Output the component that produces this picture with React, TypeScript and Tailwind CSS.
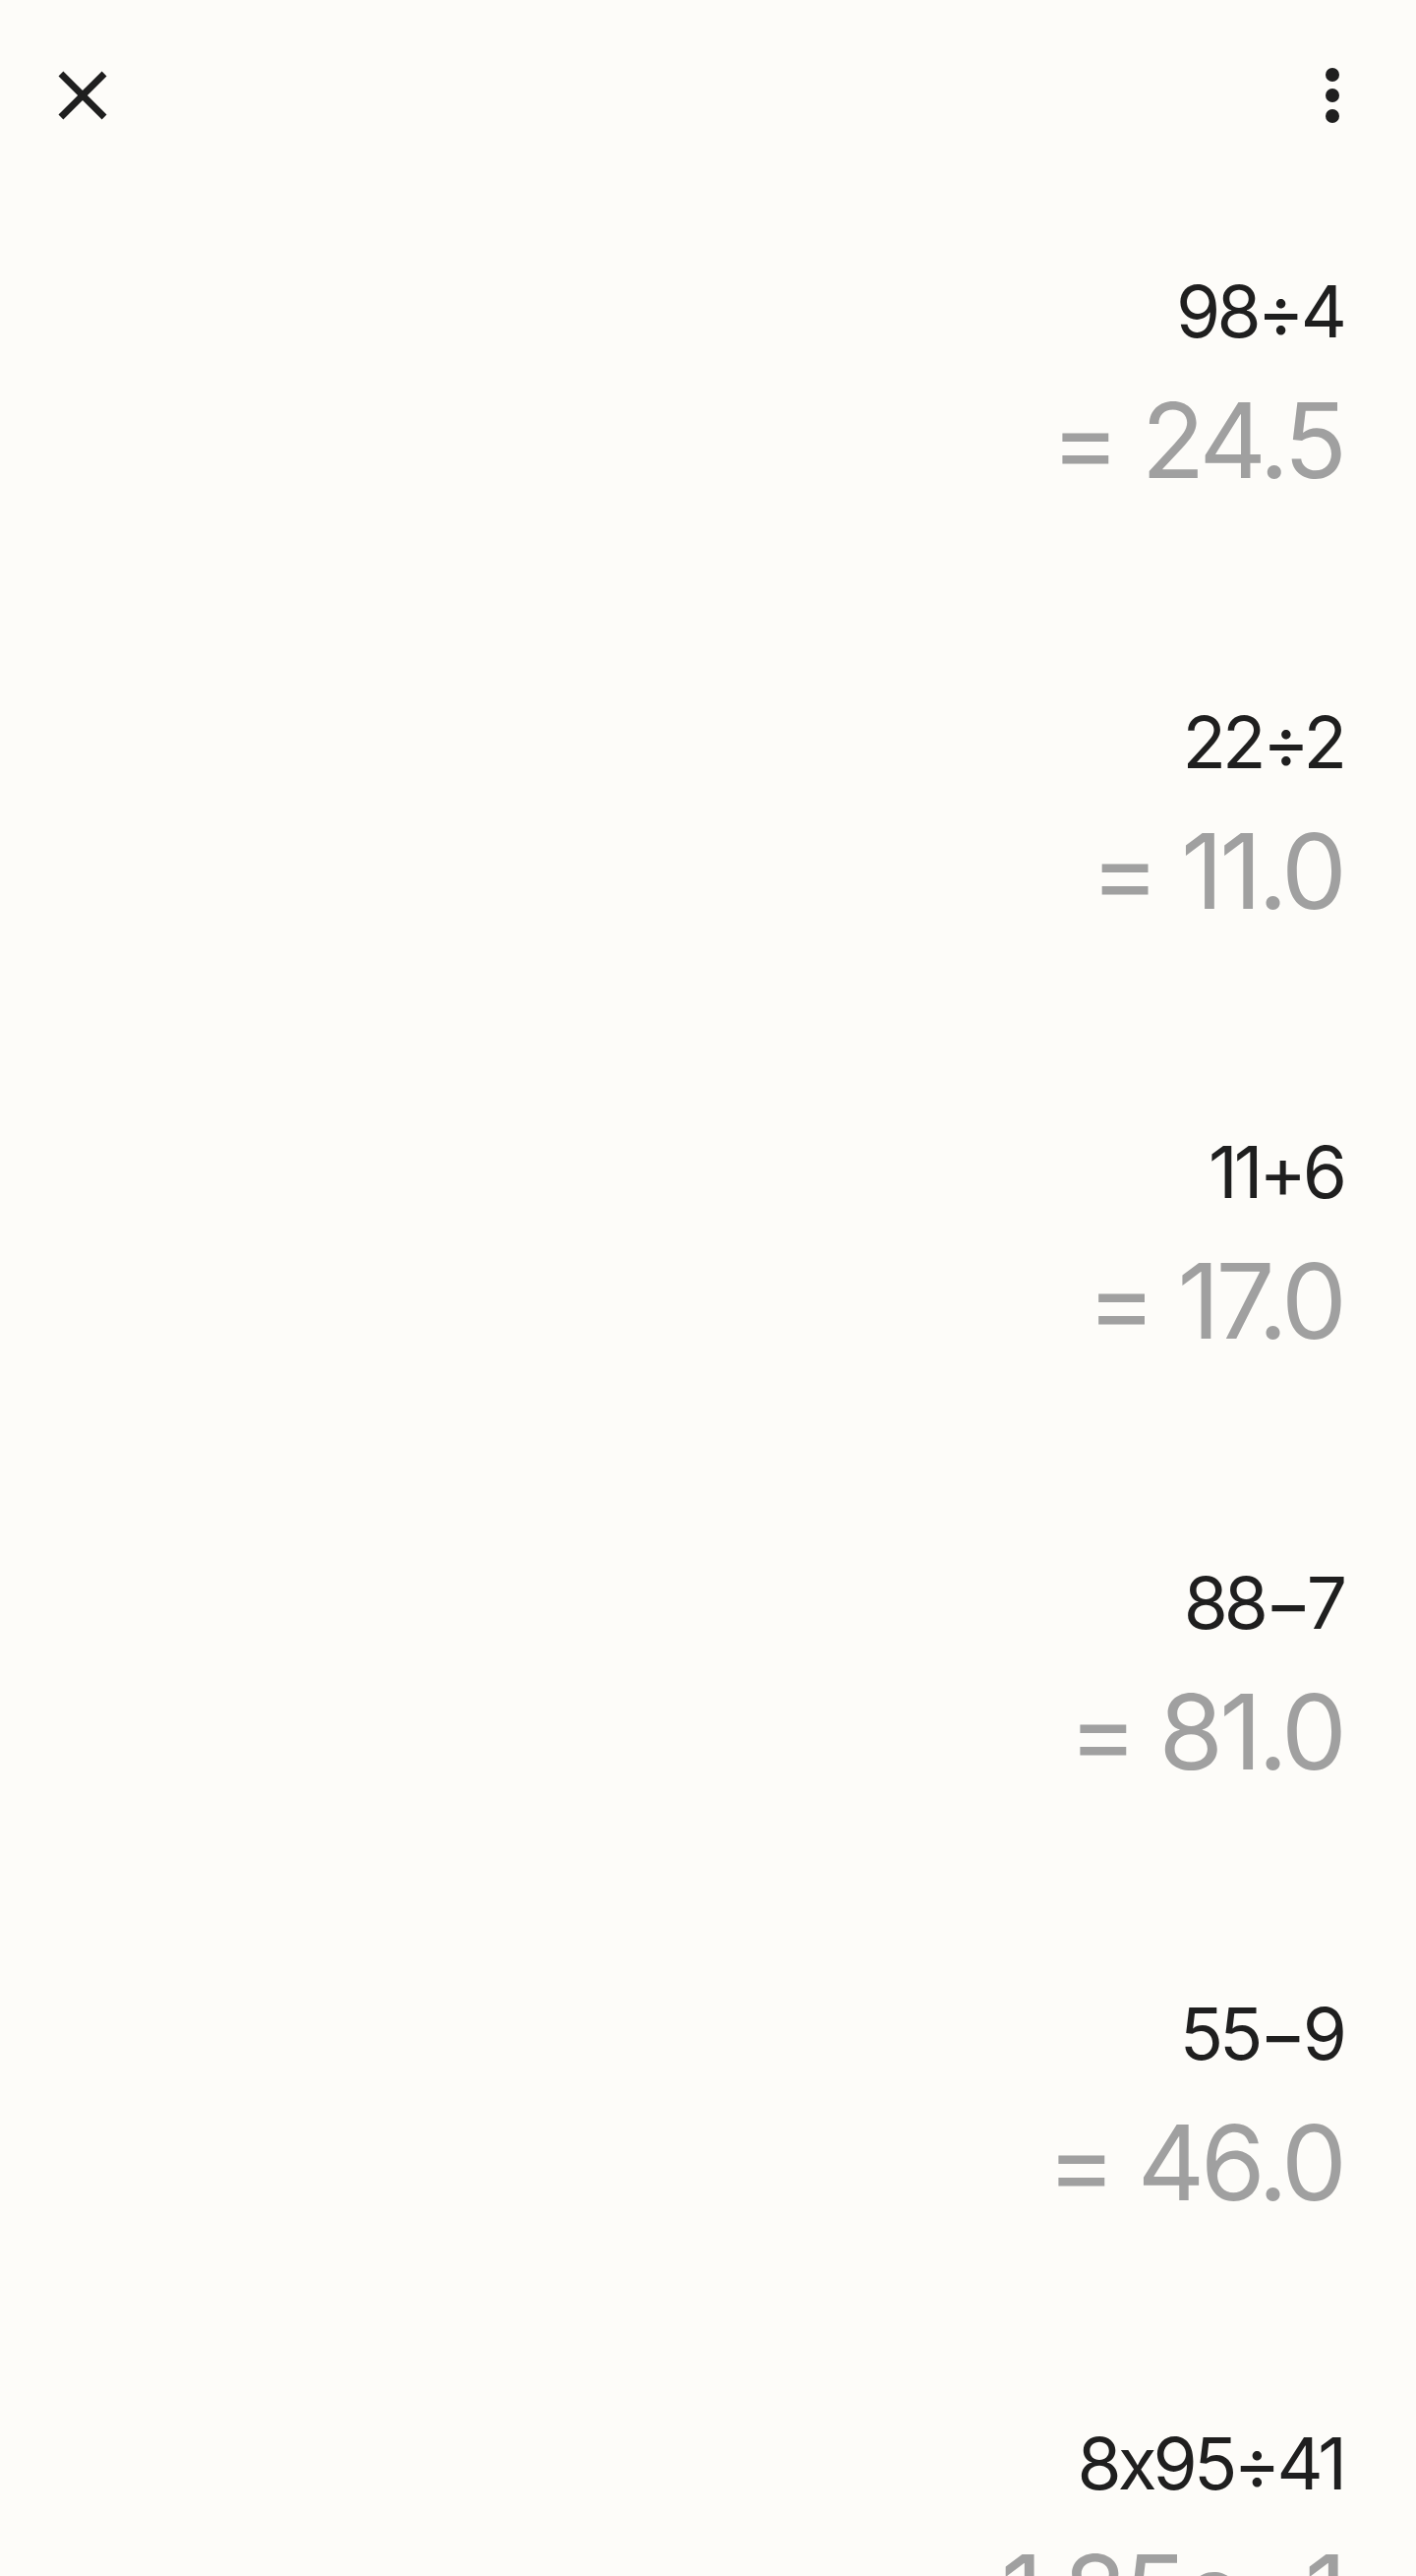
const history = [
  { expr: "98÷4", result: "24.5" },
  { expr: "22÷2", result: "11.0" },
  { expr: "11+6", result: "17.0" },
  { expr: "88−7", result: "81.0" },
  { expr: "55−9", result: "46.0" },
  { expr: "8x95÷41", result: "1.85e+1" },
];

function CloseIcon() {
  return (
    <svg viewBox="0 -960 960 960" className="w-[84px] h-[84px]" fill="#1f1f1f">
      <path d="m256-200-56-56 224-224-224-224 56-56 224 224 224-224 56 56-224 224 224 224-56 56-224-224-224 224Z" />
    </svg>
  );
}

function MoreIcon() {
  return (
    <svg viewBox="0 0 24 24" className="w-[84px] h-[84px]" fill="#1f1f1f">
      <circle cx="12" cy="6" r="2" />
      <circle cx="12" cy="12" r="2" />
      <circle cx="12" cy="18" r="2" />
    </svg>
  );
}

export default function App() {
  return (
    <div
      className="w-[1440px] h-[2619px] overflow-hidden bg-[#fdfcf9]"
      style={{ fontFamily: "Inter, 'Noto Sans', sans-serif" }}
    >
      {/* top bar */}
      <div className="h-[194px] flex items-center justify-between pl-[42px] pr-[43px]">
        <CloseIcon />
        <MoreIcon />
      </div>

      {/* history list */}
      <div className="flex flex-col pr-[74px]">
        {history.map((item) => (
          <div
            key={item.expr}
            className="flex flex-col items-end pt-[86px] pb-[130.7px]"
          >
            <div className="text-[73px] leading-[73px] text-[#1f1f1f] tracking-[-4px]">
              {item.expr}
            </div>
            <div className="mt-[42px] text-[106px] leading-[106px] text-[#a0a0a0] tracking-[-4px] whitespace-nowrap">
              = {item.result}
            </div>
          </div>
        ))}
      </div>
    </div>
  );
}
